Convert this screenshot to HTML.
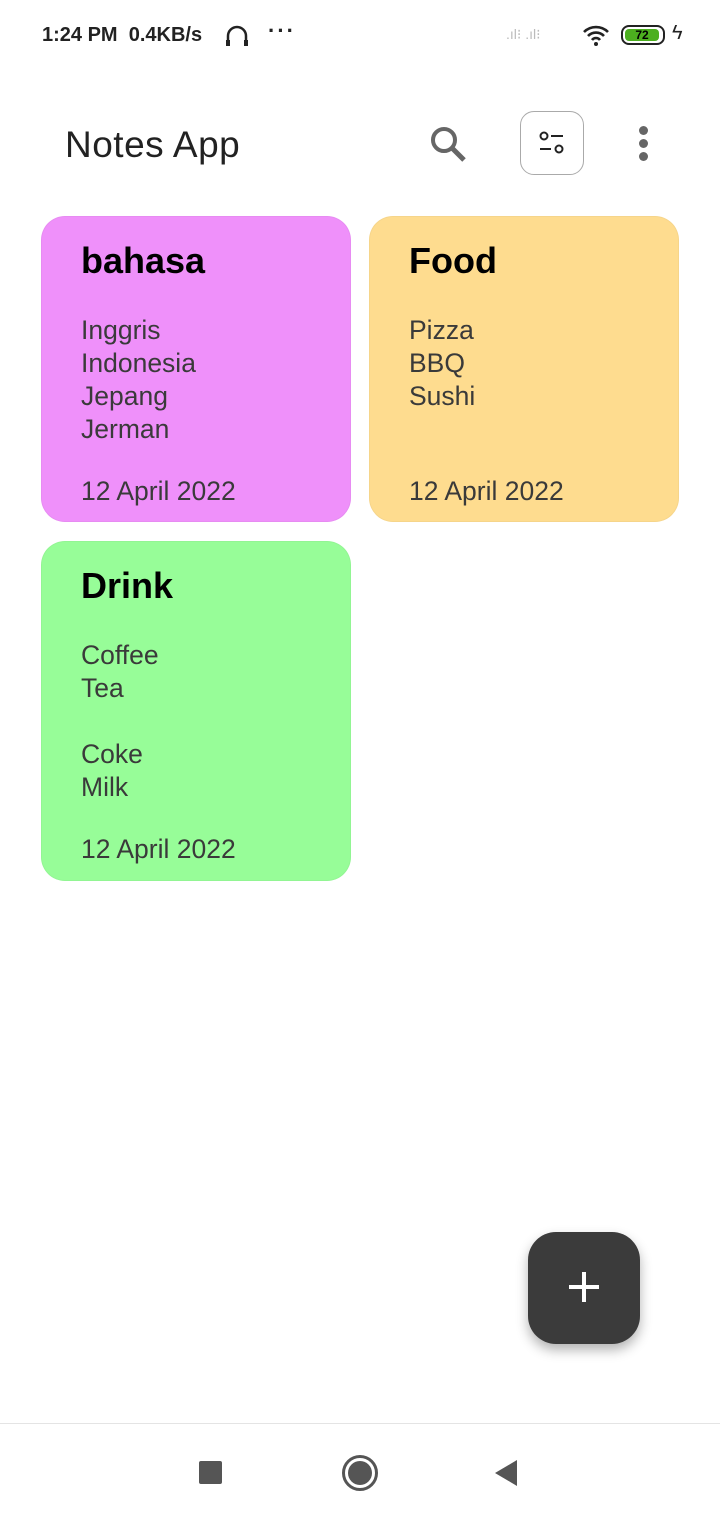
<!DOCTYPE html>
<html><head><meta charset="utf-8"><style>
*{margin:0;padding:0;box-sizing:border-box}
body{width:720px;height:1520px;background:#fff;font-family:"Liberation Sans",sans-serif;position:relative;overflow:hidden}
.abs{position:absolute}
.card{position:absolute;border-radius:24px;border:1px solid rgba(0,0,0,0.03)}
.card h2{position:absolute;left:39px;top:23px;font-size:36px;font-weight:bold;color:#000}
.card .b{position:absolute;left:39px;top:97px;font-size:26.5px;line-height:33px;color:#3a3a3a}
.card .d{position:absolute;left:39px;font-size:26.5px;color:#3a3a3a}
</style></head><body>
<div class="abs" style="left:42px;top:24px;font-size:20px;font-weight:bold;color:#222">1:24 PM&nbsp; 0.4KB/s</div>
<svg class="abs" style="left:224px;top:24px" width="26" height="24" viewBox="0 0 26 24"><path d="M4 20V12a9 9 0 0 1 18 0v8" fill="none" stroke="#222" stroke-width="2.5"/><rect x="2" y="16" width="4" height="6" fill="#222"/><rect x="20" y="16" width="4" height="6" fill="#222"/></svg>
<div class="abs" style="left:268px;top:18px;font-size:22px;font-weight:bold;color:#222;letter-spacing:2px">···</div>
<div class="abs" style="left:506px;top:26px;font-size:14px;color:#bbb">.ıl⁝ .ıl⁝</div>
<svg class="abs" style="left:582px;top:24px" width="28" height="22" viewBox="0 0 28 22"><path d="M2 8a17 17 0 0 1 24 0M6 12a11 11 0 0 1 16 0M10 16a5 5 0 0 1 8 0" fill="none" stroke="#222" stroke-width="2.6"/><circle cx="14" cy="20" r="2" fill="#222"/></svg>
<div class="abs" style="left:621px;top:25px;width:44px;height:20px;border:2px solid #222;border-radius:8px"></div>
<div class="abs" style="left:625px;top:29px;width:34px;height:12px;background:#4caf1f;border-radius:4px;font-size:12px;font-weight:bold;text-align:center;line-height:12px;color:#000">72</div>
<div class="abs" style="left:672px;top:22px;font-size:20px;color:#222">ϟ</div>

<div class="abs" style="left:65px;top:124px;font-size:37px;color:#222;letter-spacing:0.5px">Notes App</div>
<svg class="abs" style="left:428px;top:124px" width="40" height="40" viewBox="0 0 40 40"><circle cx="16" cy="16" r="11" fill="none" stroke="#666" stroke-width="4"/><path d="M24 24l12 12" stroke="#666" stroke-width="5"/></svg>
<div class="abs" style="left:520px;top:111px;width:64px;height:64px;border:1.5px solid #aaa;border-radius:14px"></div>
<svg class="abs" style="left:536px;top:128px" width="32" height="30" viewBox="0 0 32 30"><circle cx="8" cy="8" r="3.5" fill="none" stroke="#222" stroke-width="2"/><path d="M15 8h12M4 21h11" stroke="#222" stroke-width="2"/><circle cx="23" cy="21" r="3.5" fill="none" stroke="#222" stroke-width="2"/></svg>
<div class="abs" style="left:639px;top:126px;width:9px;height:9px;border-radius:50%;background:#666"></div>
<div class="abs" style="left:639px;top:139px;width:9px;height:9px;border-radius:50%;background:#666"></div>
<div class="abs" style="left:639px;top:152px;width:9px;height:9px;border-radius:50%;background:#666"></div>

<div class="card" style="left:41px;top:216px;width:310px;height:306px;background:#ef90fa">
<h2>bahasa</h2><div class="b">Inggris<br>Indonesia<br>Jepang<br>Jerman</div><div class="d" style="top:259px">12 April 2022</div></div>
<div class="card" style="left:369px;top:216px;width:310px;height:306px;background:#fedc8f">
<h2>Food</h2><div class="b">Pizza<br>BBQ<br>Sushi</div><div class="d" style="top:259px">12 April 2022</div></div>
<div class="card" style="left:41px;top:541px;width:310px;height:340px;background:#97fd98">
<h2>Drink</h2><div class="b">Coffee<br>Tea<br><br>Coke<br>Milk</div><div class="d" style="top:292px">12 April 2022</div></div>

<div class="abs" style="left:528px;top:1232px;width:112px;height:112px;border-radius:28px;background:#3b3b3b;box-shadow:0 6px 12px rgba(0,0,0,0.3)"></div>
<div class="abs" style="left:569px;top:1285px;width:30px;height:4px;background:#fff"></div>
<div class="abs" style="left:582px;top:1272px;width:4px;height:30px;background:#fff"></div>

<div class="abs" style="left:0;top:1423px;width:720px;height:1px;background:#e4e4e4"></div>
<div class="abs" style="left:199px;top:1461px;width:23px;height:23px;background:#555;border-radius:2px"></div>
<div class="abs" style="left:342px;top:1455px;width:36px;height:36px;border:3px solid #555;border-radius:50%"></div>
<div class="abs" style="left:348px;top:1461px;width:24px;height:24px;background:#555;border-radius:50%"></div>
<svg class="abs" style="left:494px;top:1459px" width="24" height="28" viewBox="0 0 24 28"><path d="M23 1V27L1 14Z" fill="#555"/></svg>
</body></html>
